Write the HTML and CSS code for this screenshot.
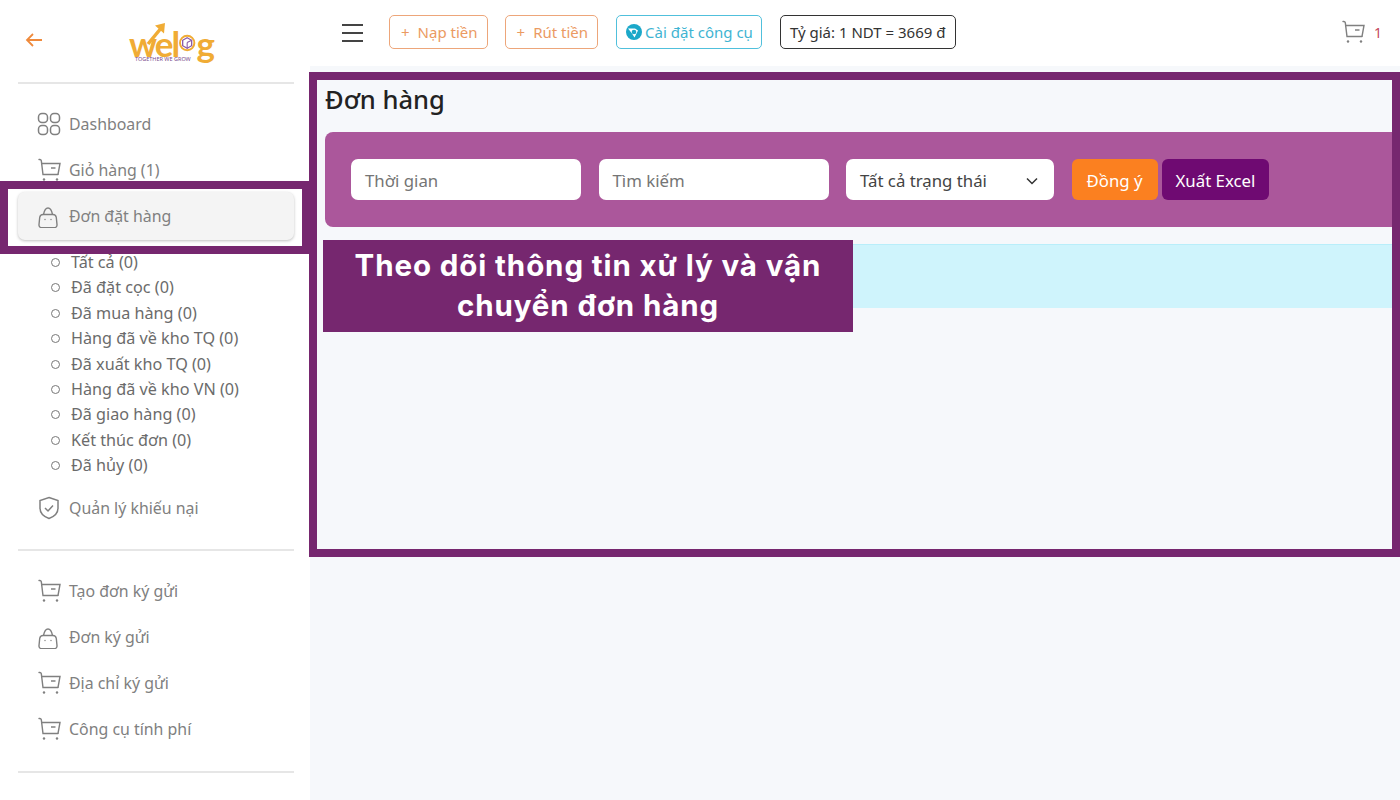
FILE: index.html
```html
<!DOCTYPE html>
<html lang="vi">
<head>
    <meta charset="UTF-8">
    <title>Đơn hàng</title>
    <link rel="stylesheet" href="styles.css">
</head>
<body>
    <svg class="icon-defs" width="0" height="0">
        <symbol id="i-cart" viewBox="0 0 24 24">
            <path d="M2 1.500h.9c.8 0 1.200.4 1.400 1.200L6 16.500h15" fill="none" stroke="currentColor" stroke-width="1.400" stroke-linecap="round"/>
            <path d="M4.500 5.500H23l-2 11" fill="none" stroke="currentColor" stroke-width="1.400"/>
            <path d="M14 10h4.500" stroke="currentColor" stroke-width="1.500"/>
            <circle cx="7" cy="21.500" r="1.200" fill="currentColor"/>
            <circle cx="20" cy="21.500" r="1.200" fill="currentColor"/>
        </symbol>
        <symbol id="i-bag" viewBox="0 -2 24 24">
            <path d="M6 8.500h10c1.800 0 3 1.200 3.300 3l.7 7c.2 2-1 3.300-3 3.300H5c-2 0-3.200-1.300-3-3.300l.7-7c.3-1.800 1.500-3 3.300-3z" fill="none" stroke="currentColor" stroke-width="1.400"/>
            <path d="M6.500 8.500C7.300 4.500 9 2 11 2s3.700 2.500 4.500 6.500" fill="none" stroke="currentColor" stroke-width="1.400"/>
            <circle cx="8" cy="13.500" r=".7" fill="currentColor"/>
            <circle cx="14" cy="13.500" r=".7" fill="currentColor"/>
        </symbol>
    </svg>

    <div class="app">
        <aside class="sidebar">
            <div class="brand">
                <svg class="back-arrow" viewBox="0 0 20 20" width="20" height="20">
                    <path d="M18 10H3M9 4l-6 6 6 6" fill="none" stroke="#ef8a3c" stroke-width="1.800"/>
                </svg>
                <div class="logo">
                    <svg class="logo-arrow" viewBox="0 0 24 24" width="24" height="24">
                        <path d="M3 22L17 5" fill="none" stroke="#f0ac35" stroke-width="3.500"/>
                        <path d="M10 3.500l10-2.500-1 10.500z" fill="#f0ac35"/>
                    </svg>
                    <div class="logo-word">
                        <span>wel</span>
                        <svg class="logo-box" viewBox="0 0 20 20" width="20" height="20">
                            <circle cx="10" cy="10" r="8.800" fill="none" stroke="#f0ac35" stroke-width="2.400"/>
                            <path d="M10 3.500l5.500 3.200v6.600L10 16.500l-5.500-3.200V6.700z" fill="none" stroke="#8b5aa8" stroke-width="1.600"/>
                            <path d="M10 9.500v7M10 9.500l5.500-2.800" fill="none" stroke="#8b5aa8" stroke-width="1.300"/>
                        </svg>
                        <span>g</span>
                    </div>
                    <div class="logo-tag">Together We Grow</div>
                </div>
            </div>

            <nav class="menu menu-main">
                <a class="menu-item">
                    <svg class="menu-icon" viewBox="0 0 24 24">
                        <rect x="1.500" y="1.500" width="9" height="9" rx="3.500"/>
                        <rect x="13.500" y="1.500" width="9" height="9" rx="3.500"/>
                        <rect x="1.500" y="13.500" width="9" height="9" rx="3.500"/>
                        <rect x="13.500" y="13.500" width="9" height="9" rx="3.500"/>
                    </svg>
                    Dashboard
                </a>
                <a class="menu-item"><svg class="menu-icon-solid"><use href="#i-cart"/></svg>Giỏ hàng (1)</a>
                <a class="menu-item active"><svg class="menu-icon-solid"><use href="#i-bag"/></svg>Đơn đặt hàng</a>
                <ul class="submenu">
                    <li>Tất cả (0)</li>
                    <li>Đã đặt cọc (0)</li>
                    <li>Đã mua hàng (0)</li>
                    <li>Hàng đã về kho TQ (0)</li>
                    <li>Đã xuất kho TQ (0)</li>
                    <li>Hàng đã về kho VN (0)</li>
                    <li>Đã giao hàng (0)</li>
                    <li>Kết thúc đơn (0)</li>
                    <li>Đã hủy (0)</li>
                </ul>
                <a class="menu-item">
                    <svg class="menu-icon" viewBox="0 0 24 24">
                        <path d="M12 1.500l9 3v7.500c0 5-3.500 8.500-9 10.500-5.500-2-9-5.500-9-10.500V4.500z"/>
                        <path d="M8 12l3 3 5-5.500"/>
                    </svg>
                    Quản lý khiếu nại
                </a>
            </nav>

            <nav class="menu menu-second">
                <a class="menu-item"><svg class="menu-icon-solid"><use href="#i-cart"/></svg>Tạo đơn ký gửi</a>
                <a class="menu-item"><svg class="menu-icon-solid"><use href="#i-bag"/></svg>Đơn ký gửi</a>
                <a class="menu-item"><svg class="menu-icon-solid"><use href="#i-cart"/></svg>Địa chỉ ký gửi</a>
                <a class="menu-item"><svg class="menu-icon-solid"><use href="#i-cart"/></svg>Công cụ tính phí</a>
            </nav>
        </aside>

        <div class="content">
            <header class="topbar">
                <div class="hamburger"><span></span><span></span><span></span></div>
                <a class="top-btn btn-orange"><span class="plus">+</span>Nạp tiền</a>
                <a class="top-btn btn-orange"><span class="plus">+</span>Rút tiền</a>
                <a class="top-btn btn-blue">
                    <svg viewBox="0 0 16 16" width="16" height="16">
                        <circle cx="8" cy="8" r="8" fill="#1ba8c9"/>
                        <path d="M2 4.500h7l3 2-3.500 7L6 9.500z" fill="#fff"/>
                        <circle cx="8" cy="8" r="2.300" fill="#1ba8c9"/>
                    </svg>
                    Cài đặt công cụ
                </a>
                <a class="top-btn btn-dark">Tỷ giá: 1 NDT = 3669 đ</a>
                <div class="top-cart">
                    <svg class="cart-svg"><use href="#i-cart"/></svg>
                    <span class="cart-count">1</span>
                </div>
            </header>

            <main class="page">
                <h1 class="page-title">Đơn hàng</h1>
                <form class="filter">
                    <div class="field field-input">Thời gian</div>
                    <div class="field field-input">Tìm kiếm</div>
                    <div class="field field-select">
                        Tất cả trạng thái
                        <svg viewBox="0 0 12 8" width="12" height="8">
                            <path d="M1 1.500l5 5 5-5" fill="none" stroke="#333" stroke-width="1.500"/>
                        </svg>
                    </div>
                    <div class="filter-btns">
                        <button type="button" class="btn-agree">Đồng ý</button>
                        <button type="button" class="btn-excel">Xuất Excel</button>
                    </div>
                </form>
                <div class="notice"></div>
            </main>
        </div>
    </div>

    <!-- highlight frames laid over the screenshot -->
    <div class="frame frame-menu"></div>
    <div class="frame frame-page"></div>
    <div class="callout">Theo dõi thông tin xử lý và vận chuyển đơn hàng</div>
</body>
</html>
```

FILE: styles.css
```css
* {
    box-sizing: border-box;
    margin: 0;
    padding: 0;
}
html, body {
    height: 100%;
    overflow: hidden;
}
body {
    font-family: "Noto Sans", "Open Sans", sans-serif;
    font-size: 15px;
    color: #333;
    background: #fff;
    position: relative;
}
.icon-defs {
    position: absolute;
}
.app {
    display: flex;
    height: 800px;
}

/* sidebar */
.sidebar {
    width: 310px;
    flex-shrink: 0;
    background: #fff;
    padding: 0 16px 0 18px;
}
.brand {
    height: 84px;
    display: flex;
    align-items: center;
    padding-left: 6px;
    padding-bottom: 2px;
    border-bottom: 2px solid #e6e6e6;
}
.back-arrow {
    flex-shrink: 0;
}
.logo {
    margin: 12px 0 0 85px;
    width: 84px;
    text-align: center;
    position: relative;
}
.logo-arrow {
    position: absolute;
    left: 16px;
    top: -8px;
}
.logo-word {
    display: flex;
    justify-content: center;
    align-items: flex-end;
    font-family: "Lato", sans-serif;
    font-weight: 700;
    font-size: 35px;
    line-height: 26px;
    letter-spacing: -2px;
    color: #f0ac35;
}
.logo-box {
    margin: 0 1px 3px 1px;
}
.logo-tag {
    font-size: 5.500px;
    line-height: 5px;
    text-transform: uppercase;
    white-space: nowrap;
    color: #7a4a8c;
    margin-top: 1px;
    text-align: left;
    padding-left: 6px;
}
.menu {
    display: flex;
    flex-direction: column;
    border-bottom: 2px solid #e6e6e6;
}
.menu-main {
    padding: 17px 0 18px;
}
.menu-second {
    padding: 17px 0 19px;
}
.menu-item {
    height: 46px;
    display: flex;
    align-items: center;
    padding-left: 19px;
    gap: 8px;
    color: #808080;
    font-size: 15.900px;
}
.menu-item.active {
    background: #f4f4f4;
    border-radius: 7px;
    box-shadow: 0 1px 3px rgba(0, 0, 0, .25);
    height: 48px;
    margin: -1px 0;
}
.menu-icon, .menu-icon-solid {
    width: 24px;
    height: 24px;
    flex-shrink: 0;
    color: #808080;
}
.menu-icon {
    fill: none;
    stroke: #808080;
    stroke-width: 1.500;
}
.submenu {
    list-style: none;
    padding: 11px 0 6px 35px;
}
.submenu li {
    height: 25.400px;
    line-height: 25.400px;
    font-size: 16.200px;
    color: #6b6b6b;
    padding-left: 18px;
    position: relative;
}
.submenu li::before {
    content: "";
    position: absolute;
    left: -2px;
    top: 8px;
    width: 7px;
    height: 7px;
    border: 1.500px solid #777;
    border-radius: 50%;
}

/* top bar */
.content {
    flex: 1;
    min-width: 0;
    background: #f6f8fb;
}
.topbar {
    height: 66px;
    background: #fff;
    display: flex;
    align-items: center;
    padding: 0 18px 2px 32px;
    gap: 17px;
}
.hamburger {
    width: 21px;
    display: flex;
    flex-direction: column;
    gap: 6px;
    margin: 2px 9px 0 0;
}
.hamburger span {
    height: 2px;
    background: #444;
}
.top-btn {
    height: 34px;
    display: flex;
    align-items: center;
    border: 1px solid;
    border-radius: 5px;
    font-size: 15px;
    white-space: nowrap;
    padding: 0 9px 0 10px;
}
.btn-orange {
    border-color: #eda67a;
    color: #eb9a62;
}
.plus {
    margin: 0 8px 0 1px;
}
.btn-blue {
    border-color: #50c0dc;
    color: #3fb4d2;
    gap: 3px;
    margin-left: 1px;
    padding: 0 8px 0 9px;
}
.btn-dark {
    border-color: #333;
    color: #333;
    margin-left: 1px;
    padding: 0 9px;
}
.top-cart {
    margin-left: auto;
    display: flex;
    align-items: center;
    gap: 9px;
}
.cart-svg {
    width: 24px;
    height: 24px;
    color: #808080;
}
.cart-count {
    color: #c5455a;
    font-size: 14px;
}

/* page */
.page {
    padding: 13px 0 0 15px;
}
.page-title {
    font-size: 25.500px;
    font-weight: 500;
    line-height: 40px;
    color: #222;
    margin-bottom: 13px;
}
.filter {
    height: 95px;
    background: #ab579b;
    border-radius: 8px 0 0 8px;
    display: flex;
    align-items: center;
    padding-left: 26px;
    gap: 17.500px;
}
.field {
    height: 41px;
    background: #fff;
    border-radius: 7px;
    display: flex;
    align-items: center;
    padding: 2px 16px 0 14px;
    font-size: 16.800px;
}
.field-input {
    width: 230px;
    color: #757575;
}
.field-select {
    width: 208px;
    justify-content: space-between;
    color: #444;
}
.filter-btns {
    display: flex;
    gap: 4px;
}
.filter-btns button {
    height: 41px;
    border: none;
    border-radius: 6px;
    font: inherit;
    font-size: 16.800px;
    color: #fff;
    padding: 2px 14px 0;
}
.filter-btns .btn-agree {
    background: #fb8020;
    padding: 2px 15px 0;
}
.btn-excel {
    background: #6f0a72;
}
.notice {
    height: 64px;
    background: #cff4fc;
    margin-top: 17px;
    border-top: 1px solid #b9eefa;
}

/* overlays */
.frame {
    position: absolute;
    border: 8px solid #76276f;
    pointer-events: none;
}
.frame-menu {
    left: 0;
    top: 181px;
    width: 310px;
    height: 73px;
}
.frame-page {
    left: 309px;
    top: 72px;
    width: 1091px;
    height: 485px;
}
.callout {
    position: absolute;
    left: 323px;
    top: 240px;
    width: 530px;
    height: 92px;
    background: #76276f;
    color: #fff;
    font-family: "Inter", sans-serif;
    font-weight: 700;
    font-size: 29.500px;
    letter-spacing: .9px;
    line-height: 40px;
    text-align: center;
    padding: 5px 20px 0;
}
```
